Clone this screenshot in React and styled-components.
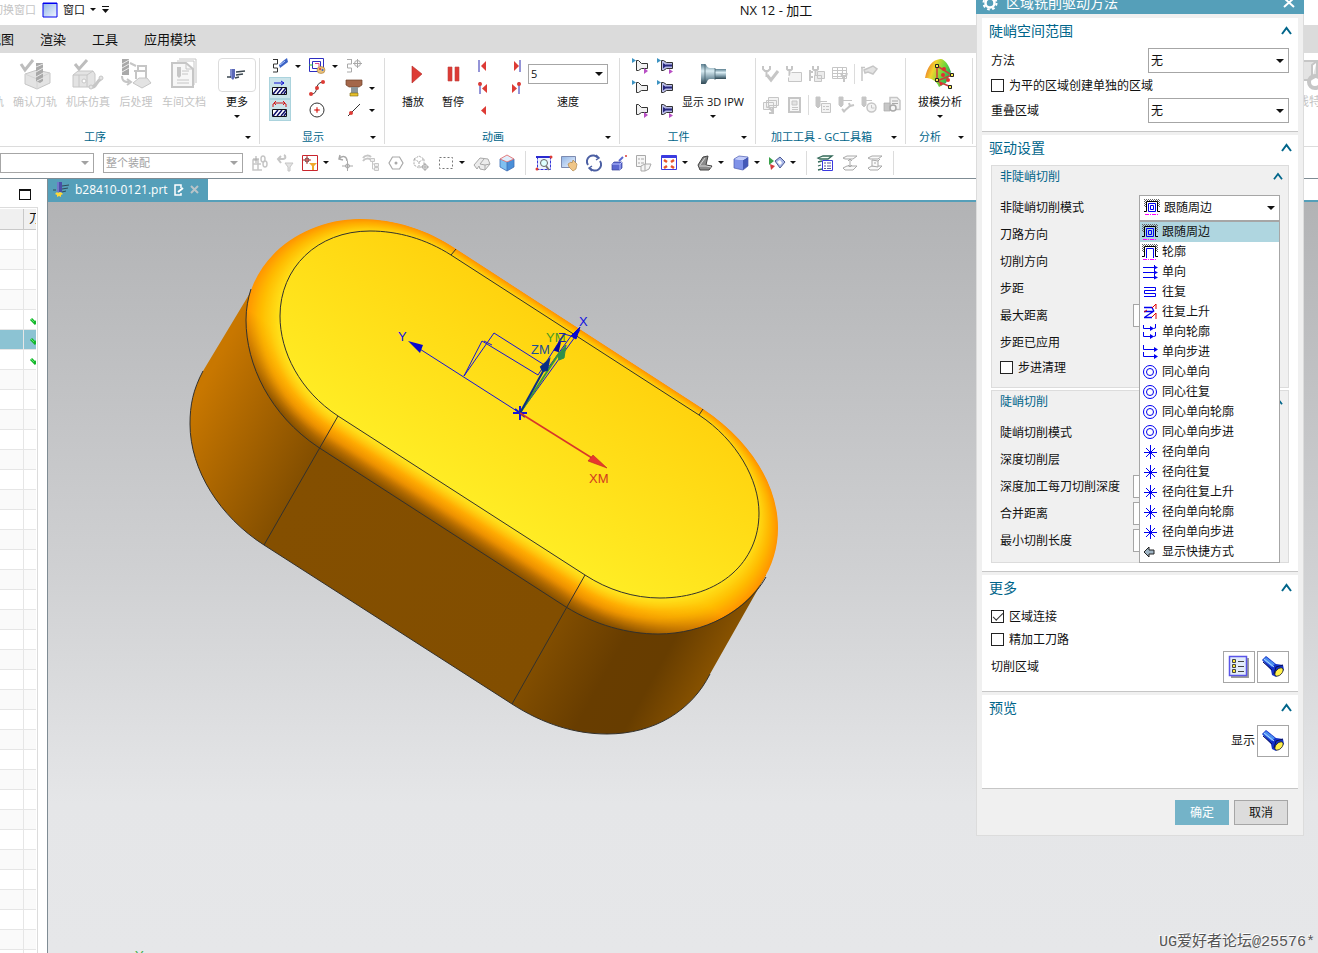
import React from "react";
import styled, { createGlobalStyle, css } from "styled-components";

const teal = "#559fb9";
const heading = "#00658a";
const line = "#dcdcdc";

const GlobalStyle = createGlobalStyle`
  * { box-sizing: border-box; }
  html, body { margin: 0; padding: 0; }
  body {
    font-family: "Open Sans", "Noto Sans CJK SC", sans-serif;
    font-size: 12px;
    line-height: 16px;
    color: #111;
    background: #fff;
    overflow: hidden;
  }
  button, select, input { font: inherit; color: inherit; margin: 0; }
  button { padding: 0; border: 0; background: none; }
`;

/* ---------- shared pieces ---------- */

const Page = styled.div`
  position: relative;
  display: flex;
  flex-direction: column;
  height: 100vh;
  overflow: hidden;
`;

const Svg = styled.svg`
  display: block;
  flex: none;
  overflow: visible;
`;

const Caret = ({ color = "#111", size = 6 }) => (
  <Svg width={size} height={size / 2} viewBox="0 0 6 3" aria-hidden="true">
    <path d="M0 0h6L3 3z" fill={color} />
  </Svg>
);

const g1 = "#c6c6c6";
const g2 = "#e3e3e3";
const g3 = "#a9a9a9";
const red = "#dd3b35";

const glyphs = {
  /* large ribbon drawings, 32 x 32 */
  generate: <path d="M4 6h14v18H4z" fill={g2} stroke={g1} />,
  verify: (
    <>
      <path d="M6 16l12-4 13 3v10l-13 6-12-5z" fill={g2} stroke={g1} />
      <path d="M6 16l12 5 13-6M18 21v10" fill="none" stroke="#d4d4d4" />
      <path d="M17 5h7v18l-3 2-4-2z" fill={g3} />
      <path d="M17 9l7-3M17 14l7-4M17 19l7-4M18 23l6-3" stroke="#e8e8e8" />
      <path d="M2 6l4 6 8-10" fill="none" stroke="#bdbdbd" strokeWidth="3" />
    </>
  ),
  simulate: (
    <>
      <path d="M1 17l5-4h15l2 3v10l-5 3H1z" fill={g2} stroke={g1} />
      <path d="M1 17h14v12M15 17l6-4M7 17v12" fill="none" stroke={g1} />
      <circle cx="12" cy="23" r="2" fill="#fff" stroke={g1} />
      <path d="M20 29c4 1 4-6 9-8" fill="none" stroke={g1} strokeWidth="3" />
      <circle cx="19" cy="29" r="2" fill={g2} stroke={g1} />
      <circle cx="29" cy="20" r="2" fill={g2} stroke={g1} />
      <path d="M3 6l4 5 8-9" fill="none" stroke="#bdbdbd" strokeWidth="3" />
    </>
  ),
  post: (
    <>
      <path d="M2 1h7v16H2z" fill={g3} />
      <path d="M2 6l7-4M2 10l7-4M2 14l7-4" stroke="#ededed" />
      <path d="M10 5l6 3M14 13h12M18 8h8v5h-8zM16 13v8M26 12v10" fill="none" stroke={g1} strokeWidth="2" />
      <path d="M13 25l6-5h8l4 5-9 5z" fill={g2} stroke={g1} />
      <path d="M2 18c0 6 4 6 7 6M7 21l4 3-4 3" fill="none" stroke={g1} strokeWidth="2" />
    </>
  ),
  doc: (
    <>
      <path d="M11 1h17v24M9 3h17v24" fill="none" stroke={g1} />
      <path d="M4 5h14l7 6v18H4z" fill="#f7f7f7" stroke={g1} strokeWidth="2" />
      <path d="M18 5v6h7" fill="none" stroke={g1} />
      <path d="M9 9h4v9l-2 2-2-2z" fill={g1} />
      <path d="M14 13h7M14 16h6M9 22h12M9 25h12" stroke={g1} />
    </>
  ),
  more: (
    <>
      <path d="M9 10h5v8l-2 3-3-3z" fill="#5b68b8" />
      <path d="M10 10v9" stroke="#a9b4e6" />
      <path d="M6 18h4M15 13l9-1M15 16l7-1M14 19l4-1" stroke="#3b4750" strokeWidth="1.5" />
    </>
  ),
  ipw: (
    <>
      <path d="M4 6h4c2 1 2 4 5 4h5v11h-5c-3 0-3 5-5 5H4z" fill="url(#steel)" />
      <path d="M18 11h11v10H18z" fill="url(#steel)" />
      <path d="M8 6v20M18 10v12" stroke="#3f5b69" strokeWidth="0.7" />
    </>
  ),
  draft: (
    <>
      <path d="M1 20C3 9 8 2 16 1c4-1 9 6 11 13l-5 11-7 4C12 22 7 20 1 20z" fill="url(#rainbow)" />
      <path d="M13 8v15l14 6M13 8l15 9-15 6" fill="none" stroke="#d23a3a" strokeWidth="1.5" />
      <g fill="#e23030">
        <circle cx="20" cy="11" r="2" /><circle cx="19" cy="17" r="2" />
        <circle cx="24" cy="22" r="2" /><circle cx="17" cy="26" r="1.5" />
      </g>
      <g fill="#ffef4a" stroke="#222">
        <path d="M11.5 6.5h3v3h-3zM11.5 20.5h3v3h-3zM26.5 15.5h3v3h-3zM24.5 27.5h3v3h-3z" />
      </g>
    </>
  ),
  feature: (
    <>
      <path d="M5 3h19v15l-7 4H5zM10 3v15M24 3l-5 4v14" fill={g2} stroke={g1} strokeWidth="2" />
      <circle cx="22" cy="24" r="6" fill="none" stroke={g1} strokeWidth="4" />
    </>
  ),
  play: <path d="M15 8l10 8-10 9z" fill={red} stroke="#b22a25" strokeWidth="0.6" />,
  pause: <path d="M11 9h4v14h-4zM18 9h4v14h-4z" fill={red} stroke="#c04540" strokeWidth="0.6" />,

  /* small drawings, 16 x 16 */
  pathLight: (
    <>
      <path d="M1 1.5h5M5.500 2v4h-4v4h4v4H1" fill="none" stroke="#333" />
      <path d="M7 7l4-4 4-3 1 4-4 3-4 3z" fill="#3b62c4" />
      <path d="M8 7l5-4" stroke="#a9c5ff" />
    </>
  ),
  pathColor: (
    <>
      <path d="M.5.5h14v13H.5zM3.5 3.5h8v7h-8z" fill="#fff" stroke="#2d2dc0" />
      <path d="M6 5.5h4v4" fill="none" stroke="#e04b8b" />
      <path d="M0 7h4" stroke="#2fbf2f" />
      <ellipse cx="12" cy="12" rx="4" ry="3.5" fill="#e9c07a" stroke="#a97c35" strokeWidth="0.6" />
      <circle cx="11" cy="11" r="1" fill="#d33" /><circle cx="13.5" cy="12" r="1" fill="#36c" />
    </>
  ),
  pathTarget: (
    <g fill="none" stroke={g3}>
      <path d="M1 1.5h5M5.5 2v4h-4v4h4v4H1" /><circle cx="11.5" cy="5.5" r="3" /><path d="M11.5 1v9M7 5.5h9" />
    </g>
  ),
  hatchArrow: (
    <>
      <path d="M2 3h10M9 1l3 2-3 2" fill="none" stroke="#1212d0" />
      <path d="M.5 7.5h14v7H.5z" fill="#fff" stroke="#111" />
      <path d="M1 14l5-6M5 14l5-6M9 14l5-6M12 14l2-3" stroke="#10106a" strokeWidth="1.5" />
    </>
  ),
  hatchLoop: (
    <>
      <path d="M1 5V2l2-1h9l2 1v3M4-1L2 1l2 2M11-1l2 2-2 2" fill="none" stroke="#d01818" />
      <path d="M.5 7.5h14v7H.5z" fill="#fff" stroke="#111" />
      <path d="M1 14l5-6M5 14l5-6M9 14l5-6M12 14l2-3" stroke="#10106a" strokeWidth="1.5" />
    </>
  ),
  spline: (
    <>
      <path d="M2 14c9 0 2-11 12-12" fill="none" stroke="#333" />
      <g fill={red}><circle cx="2" cy="14" r="2" /><circle cx="8" cy="8" r="2" /><circle cx="14" cy="2" r="2" /></g>
    </>
  ),
  circle: (
    <>
      <circle cx="8" cy="8" r="7" fill="none" stroke="#333" />
      <path d="M8 5v6M5 8h6" stroke={red} /><circle cx="8" cy="8" r="1.5" fill={red} />
    </>
  ),
  holder: (
    <>
      <path d="M0 0h16v5l-3 2H3L0 5z" fill="#a4674a" stroke="#6d4129" strokeWidth="0.7" />
      <path d="M5 7h7v6H5z" fill="#8d979c" /><path d="M4 13h8v3H4z" fill="#e8c22c" stroke="#7a6512" strokeWidth="0.6" />
    </>
  ),
  lineDot: (<><path d="M2 14L14 2" stroke="#333" /><circle cx="5" cy="11" r="2" fill={red} /></>),
  toStart: (<><path d="M2 2v12" stroke="#2a2ab0" /><path d="M9 3v10L4 8z" fill={red} /></>),
  toEnd: (<><path d="M13 2v12" stroke="#2a2ab0" /><path d="M7 3v10l5-5z" fill={red} /></>),
  prevOp: (<><path d="M3 2v12" stroke="#2a2ab0" /><path d="M10 4v9L5 8.5z" fill={red} /><circle cx="3" cy="4" r="2" fill={red} /></>),
  nextOp: (<><path d="M12 2v12" stroke="#2a2ab0" /><path d="M5 4v9l5-4.5z" fill={red} /><circle cx="12" cy="4" r="2" fill={red} /></>),
  back: <path d="M9 4v9L4 8.5z" fill={red} />,
  blankA: (<><path d="M0 0v5l4-2.5z" fill="#3d93c2" /><path d="M4.5 2.5h2l3 3h6v5h-6l-3 2h-2z" fill="#f1f1f1" stroke="#333" /><path d="M12 10v6l4-3z" fill="#b84fc4" /></>),
  blankB: (<><path d="M0 0v5l4-2.5z" fill="#3d93c2" /><path d="M4.5 2.500h2l3 3h6v5h-6l-3 2h-2z" fill="#f1f1f1" stroke="#333" /></>),
  blankC: (<><path d="M4.5 2.5h2l3 3h6v5h-6l-3 2h-2z" fill="#f1f1f1" stroke="#333" /><path d="M12 10v6l4-3z" fill="#b84fc4" /></>),
  partA: (<><path d="M0 0v5l4-2.5z" fill="#3d93c2" /><path d="M4.5 2.5h2l3 2h6v6h-6l-3 2h-2z" fill="#b9bce6" stroke="#333" /><path d="M6 5l4 2.500-4 3zM9 6.500h6v2H9z" fill="#27277e" /><path d="M12 11v5l4-2.5z" fill="#b84fc4" /></>),
  partB: (<><path d="M0 0v5l4-2.5z" fill="#3d93c2" /><path d="M4.5 2.5h2l3 2h6v6h-6l-3 2h-2z" fill="#b9bce6" stroke="#333" /><path d="M6 5l4 2.5-4 3zM9 6.5h6v2H9z" fill="#27277e" /></>),
  partC: (<><path d="M4.5 2.5h2l3 2h6v6h-6l-3 2h-2z" fill="#b9bce6" stroke="#333" /><path d="M6 5l4 2.5-4 3zM9 6.5h6v2H9z" fill="#27277e" /><path d="M12 11v5l4-2.5z" fill="#b84fc4" /></>),
  gcCheck: (<><path d="M0 0v3l2 2h3l2-2V0M3.5 5v6" fill="none" stroke={g1} strokeWidth="2" /><path d="M4 9l4 5 7-9" fill="none" stroke={g1} strokeWidth="3" /></>),
  gcTool: (<><path d="M1 0v3l1 1h3l1-1V0M3.5 4v6" fill="none" stroke={g1} strokeWidth="2" /><path d="M5.5 6.5h10v9h-13v-4" fill="#f3f3f3" stroke={g1} /></>),
  gcCopy: (<><path d="M4 0v3l1 1h3l1-1V0M6.5 4v6M1 4v11M1 6h3M1 11h3" fill="none" stroke={g1} strokeWidth="2" /><path d="M8.5 5.500h7v7h-7zM5.5 9.5h7v6h-7z" fill="#ececec" stroke={g1} /></>),
  gcTable: (<><path d="M.5 1.5h14v11H.5zM.5 4.5h14M.5 7.5h14M.5 10.500h14M5.5 1v11M10.5 1v11" fill="none" stroke={g1} /><path d="M9 7l1 3h4l1-3M12 10v6" fill="none" stroke={g1} strokeWidth="2" /></>),
  gcArm: (<path d="M1 1v14M0 1.500h4M3 4l9-4 4 3-4 5-5-2-3 1z" fill={g2} stroke={g1} strokeWidth="1.5" />),
  gcPages: (<><path d="M5.5.5h10v8h-10zM3.5 3.5h10v7h-10zM.5 5.5h10v7H.5z" fill="#f3f3f3" stroke={g1} /><path d="M5 9l5 6M10 11v5H6" stroke={g1} strokeWidth="2" fill="none" /></>),
  gcSheet: (<><path d="M3 1h11v14H3z" fill="#f6f6f6" stroke={g1} strokeWidth="2" /><path d="M6 4h5v4H6zM6 10.5h6M6 12.5h6" stroke={g1} fill={g2} /></>),
  gcList: (<><path d="M1 0h4v9L3 11 1 9zM5 4.500h7" stroke={g1} fill={g1} /><path d="M6.5 6.5h9v9h-9zM8 9.500h2M11 9.500h3M8 12.500h2M11 12.500h3" fill="#f3f3f3" stroke={g1} /></>),
  gcWrench: (<><path d="M1 0h4v8l-2 2-2-2zM5 3.500h9" stroke={g1} fill={g1} /><path d="M5 15l7-6M11 6l1 3 4-1M4 12l3 3" stroke={g1} strokeWidth="2" fill="none" /></>),
  gcClock: (<><path d="M1 0h4v8l-2 2-2-2zM5 3.5h6" stroke={g1} fill={g1} /><circle cx="10.5" cy="10.5" r="4.5" fill="#f3f3f3" stroke={g1} strokeWidth="1.5" /><path d="M10.5 8v3h3" fill="none" stroke={g1} /></>),
  gcPrint: (<><path d="M6 .5h7l3 3v9H6z" fill="#f1f1f1" stroke={g1} strokeWidth="1.5" /><path d="M8 4h6M8 6.500h6" stroke={g3} /><path d="M0 6h6v8H0z" fill={g1} stroke={g3} strokeWidth="0.7" /><circle cx="9" cy="11" r="3" fill="#f6f6f6" stroke={g3} strokeWidth="1.5" /></>),

  /* selection bar */
  selAsm: (<g fill="none" stroke={g1} strokeWidth="1.5"><path d="M1 5h5v10H1zM1 9h8M6 9v6h4" /><path d="M4 1v7M1 4h6" stroke={g3} strokeWidth="1" /><ellipse cx="11" cy="4" rx="2" ry="3" /><ellipse cx="13" cy="9" rx="2" ry="3" /></g>),
  selBack: (<><path d="M1 4h5c3 0 3-3 1-4M4 1L1 4l3 4" fill="none" stroke={g1} strokeWidth="2" /><path d="M8 8h8l-3 4v4h-2v-4z" fill={g2} stroke={g1} /></>),
  selFilter: (<><path d="M.5.5h15v15H.5z" fill="#fff" stroke="#c9252d" /><circle cx="5" cy="5" r="2" fill="none" stroke="#444" /><path d="M5 1v8M1 5h8" stroke="#b33" /><path d="M7 8h8l-3 3v4h-2v-4z" fill="#f0a92c" /></>),
  selUndo: (<><path d="M1 4c3-4 8-3 8 2M2 0L1 4l4 1" fill="none" stroke={g3} strokeWidth="1.5" /><path d="M9.5 6v10M4 11h11" stroke={g3} /><circle cx="9.5" cy="11" r="2" fill="none" stroke={g3} /></>),
  selTree: (<><path d="M0 3c2-3 6-3 8-1M0 6c2-3 6-3 8-1" fill="none" stroke={g1} strokeWidth="2" /><path d="M9.5 5v9h2M9 9h2" fill="none" stroke={g1} /><path d="M7.5 3.500h4v3h-4zM11.5 8.5h4v3h-4zM11.5 12.5h4v3h-4z" fill="#eee" stroke={g1} /></>),
  selHex: (<><path d="M4.5 2h7L15 8l-3.5 6h-7L1 8z" fill="none" stroke={g3} strokeWidth="1.2" /><circle cx="8" cy="8" r="1.5" fill={g3} /></>),
  selCube: (<g fill="none" stroke={g3}><path d="M1 4l5-3 5 3v6l-5 3-5-3zM1 4l5 3 5-3M6 7v6" strokeDasharray="2 1" /><circle cx="12" cy="12" r="2.5" fill="#fff" /><path d="M12 8v8M8 12h8" /></g>),
  selRect: <path d="M1.5 2.5h13v11h-13z" fill="none" stroke="#777" strokeDasharray="2 2" />,
  selShell: (<><path d="M0 10l6-7 8 1 2 5-5 6-5-1-1-3-2 3z" fill="#ececec" stroke={g3} /><path d="M6 9l4-5M6 9l5 1 5-1M11 10v5" stroke={g3} fill="none" /></>),
  cubeRed: (<><path d="M1 4l7 3v9l-7-4z" fill="#7fc0f0" /><path d="M15 4L8 7v9l7-4z" fill="#4a8fd8" /><path d="M1 4l7-4 7 4-7 3z" fill="#dfeefc" stroke="#e06060" strokeWidth="0.8" /><path d="M8 7v9M1 4v8l7 4 7-4V4" fill="none" stroke="#3f6fb5" strokeWidth="0.8" /></>),
  fitView: (<><path d="M1.5 2.5h13v12h-13z" fill="#eef4ff" stroke="#3434d8" strokeDasharray="3 1" /><path d="M0 2h16" stroke="#2a2ad0" strokeWidth="2" /><circle cx="8" cy="8" r="3.5" fill="#dff" stroke="#666" /><path d="M10 11l3 4" stroke="#777" strokeWidth="2" /><circle cx="1" cy="14" r="1.5" fill={red} /><circle cx="15" cy="2" r="1.5" fill={red} /></>),
  pan: (<><path d="M.5 1.5h14v11H.5z" fill="url(#sky)" stroke="#7d8bb0" /><path d="M7 9l3-2 1 1 1-3 4 4-1 5-3 2-4-4z" fill="#f0c687" stroke="#a5783c" strokeWidth="0.6" /></>),
  rotate: (<g fill="none" stroke="#4b5fa3" strokeWidth="2"><path d="M2 10A6 6 0 0112 3M14 6A6 6 0 014 13" /><path d="M10 0l3 3-3 2M6 16l-3-3 3-2" strokeWidth="1.5" /></g>),
  arrowCube: (<><path d="M1 9l2-2h8v6l-2 2H1z" fill="#5b68d0" stroke="#38429a" strokeWidth="0.7" /><path d="M1 9h8v6M9 9l2-2" fill="none" stroke="#b9c0ff" /><path d="M8 6l4-4" stroke="#5b68d0" strokeWidth="2" /><circle cx="15" cy="1" r="1" fill={red} /></>),
  orient: (<g fill="#f6f6f6" stroke={g3}><path d="M.5.5h9v11h-9zM2 4h2M5 4h3M2 8h2M5 8h3" /><path d="M5 11l4-2h6l-2 5-4 2H5zM9 9v7" /></g>),
  grid4: (<><path d="M.5.5h15v14H.5z" fill="#fff" stroke="#3b3be0" /><path d="M1 2h14" stroke="#3b3be0" strokeWidth="2" /><path d="M3 5l3 2M10 7l3-2M3 13l3-2M10 11l3 2" stroke="#e8542c" strokeWidth="2.5" /></>),
  shade: (<><path d="M1 10L6 2l5-1-2 9 6 1-3 4H3z" fill="#8a8a8a" stroke="#444" /><path d="M2 11h7l5 1M3 10l5-7" stroke="#d9d9d9" fill="none" /></>),
  blueCube: (<><path d="M1 4l9 1v10l-9-2z" fill="#7f92e8" /><path d="M10 5l5-3v9l-5 4z" fill="#4459b8" /><path d="M1 4l5-3 9 1-5 3z" fill="#c3cdfb" /><path d="M1 4l5-3 9 1v9l-5 4-9-2z" fill="none" stroke="#4a5ab0" strokeWidth="0.7" /></>),
  section: (<><path d="M0 2l5 4-5 4z" fill="#3aa14b" /><path d="M1 9l5 2-4 4z" fill="#d43a3a" /><path d="M6 6l5-4 5 5-5 6z" fill="#a9b8e8" stroke="#4c5a94" /><path d="M8 7l3-2 2 3-2 2z" fill="#fff" /></>),
  layers: (<><path d="M1 3l5-2h9l-4 3H3zM1 7l4-1M1 11l3-1M1 15l4-1" fill="#f4fff4" stroke="#356a5a" strokeWidth="1.3" /><path d="M5.5 5.5h10v10h-10z" fill="#fff" stroke="#3b3be0" /><path d="M7 8h2M10 8h4M7 11h2M10 11h4M7 13.5h2M10 13.5h4" stroke="#5a5a9a" strokeWidth="1.2" /></>),
  layerUp: (<g fill="#fafafa" stroke={g3}><path d="M1 3l4-2h10l-4 3H3zM1 13l4-2h10l-4 4H3z" /><path d="M8 4v8M6 6l2-2 2 2M6 10l2 2 2-2" fill="none" /></g>),
  layerBox: (<g fill="#fafafa" stroke={g3}><path d="M1 3l4-2h10l-4 3H3zM1 13l4-2h10l-4 4H3z" /><path d="M5 5l6 1v6l-6-1zM11 6l2-2M7 8h2" /></g>),

  /* drill shown on the part tab */
  drill: (<><path d="M4 0h5v10H4z" fill="#4a4fa8" /><path d="M5 0v10" stroke="#9aa0ea" /><path d="M9 4l7-1M9 7l6-1M9 10l4-1M0 8h3" stroke="#2f4a58" /><path d="M2 12l2-2 1 1 2-1 2 1 1 1-2 1v2l-2-1-2 1v-2z" fill="#ffd83a" /></>),

  /* cut patterns */
  follow: (
    <>
      <path d="M0 8V0h16v8h-2V2H2v6z" fill="url(#dither)" />
      <path d="M0 12.5h2.500v-10h11v10H16" fill="none" stroke="#000" />
      <path d="M4.5 4.5h7v8h-7zM6.5 6.5h3v4h-3z" fill="none" stroke="#0000f0" />
      <path d="M1 15.5h14" stroke="#f0f" strokeDasharray="4 1 1 1" />
    </>
  ),
  profile: (
    <>
      <path d="M0 8V0h16v8h-2V2H2v6z" fill="url(#dither)" />
      <path d="M0 12.5h2.5v-10h11v10H16" fill="none" stroke="#000" />
      <path d="M4.5 14V4.5h7V14" fill="none" stroke="#0000f0" />
      <path d="M1 15.5h14" stroke="#f0f" strokeDasharray="4 1 1 1" />
    </>
  ),
  zig: (<g stroke="#0000f0" fill="#0000f0"><path d="M1 3.5h12M1 8.5h12M1 13.5h12M12.5 1v14" fill="none" /><path d="M12 1.500l4 2-4 2zM12 6.500l4 2-4 2zM12 11.500l4 2-4 2z" stroke="none" /></g>),
  zigzag: <path d="M2 3.5h11.500v3h-11v3h11v3H2" fill="none" stroke="#0000f0" />,
  zigLift: (<><path d="M2 3.5h8l2 4M2 7.5h9M2 13.5h8M12 7l-9 6" fill="none" stroke="#0000f0" strokeWidth="1.3" /><path d="M10 4l4-4v5M2 8l3-2M10 13l4-4v6" fill="none" stroke="#e00000" /></>),
  zigContour: (<g fill="none" stroke="#0000f0"><path d="M1.5 1v3.500h9M13.5 0v4l-2 .5M1.5 8v4.500h9M13.5 8v4l-2 .5" /><path d="M8 2l4 2.500-4 2.500zM8 10l4 2.500-4 2.500z" fill="#0000f0" stroke="none" /></g>),
  zigStep: (<g fill="none" stroke="#0000f0"><path d="M1.5 1v4.5h12M1.5 8v4.5h12" /><path d="M12 3l4 2.500-4 2.500zM12 10l4 2.500-4 2.500z" fill="#0000f0" stroke="none" /></g>),
  concentric: (<g fill="none" stroke="#0000f0"><circle cx="8" cy="8" r="6.5" /><circle cx="8" cy="8" r="3.5" /></g>),
  radial: <path d="M8.500 1v14M2 8.500h13M4 4l9 9M13 4l-9 9" stroke="#0000f0" fill="none" />,
  shortcut: <path d="M2 8l5-5v3h5v4H7v3z" fill="#9fb4c4" stroke="#222" />,

  /* dialog drawings, 22 x 22 */
  list: (
    <>
      <path d="M3 2h18v20H3z" fill="#9a9a9a" />
      <path d="M1.5.5h17v19h-17z" fill="#e2ecfb" stroke="#5a55e8" strokeWidth="1.5" />
      <g fill="#ffe93a" stroke="#444"><path d="M4.5 3.5h3v3h-3zM4.5 8.5h3v3h-3zM4.5 13.5h3v3h-3z" /></g>
      <path d="M10 5.5h6M10 10.5h6M10 15.5h6" stroke="#444" />
    </>
  ),
  torch: (
    <>
      <path d="M0 4l4-4 10 8 7 1 1 5-8 7-4-2-1-5z" fill="#1330c8" />
      <path d="M1 4l3-3 9 7-3 3z" fill="#4a8df0" />
      <path d="M2 3l10 8" stroke="#b5dcff" />
      <path d="M1 6l9 8M12 18l2-7 7-2" stroke="#08105a" fill="none" />
      <ellipse cx="17" cy="16" rx="5" ry="3" fill="#fff04a" stroke="#222" strokeWidth="0.8" transform="rotate(-45 17 16)" />
    </>
  ),
};

const Icon = ({ name, size = 16 }) => (
  <Svg width={size} height={size} viewBox={`0 0 ${size} ${size}`} aria-hidden="true">
    {glyphs[name]}
  </Svg>
);

const HiddenSvg = styled.svg`
  position: absolute;
  width: 0;
  height: 0;
`;
const Defs = () => (
  <HiddenSvg aria-hidden="true">
    <defs>
      <linearGradient id="steel" x1="0" y1="0" x2="0" y2="1">
        <stop offset="0" stopColor="#5b7f90" /><stop offset="0.35" stopColor="#d9ecf3" />
        <stop offset="0.7" stopColor="#7d9aa8" /><stop offset="1" stopColor="#2f4854" />
      </linearGradient>
      <linearGradient id="rainbow" x1="0" y1="0" x2="1" y2="0.4">
        <stop offset="0" stopColor="#e84a28" /><stop offset="0.4" stopColor="#f2d22e" />
        <stop offset="0.75" stopColor="#6bd83a" /><stop offset="1" stopColor="#2fae5a" />
      </linearGradient>
      <linearGradient id="sky" x1="0" y1="0" x2="1" y2="1">
        <stop offset="0" stopColor="#8fb4e6" /><stop offset="1" stopColor="#f2f7ff" />
      </linearGradient>
      <pattern id="dither" width="2" height="2" patternUnits="userSpaceOnUse">
        <path d="M0 0h1v1H0zM1 1h1v1H1z" fill="#666" />
      </pattern>
    </defs>
  </HiddenSvg>
);

/* ---------- title and menu ---------- */

const TitleBar = styled.header`
  display: grid;
  grid-template-columns: 1fr auto 1fr;
  align-items: center;
  flex: none;
  height: 25px;
  padding: 0 0 6px 234px;
`;
const QuickAccess = styled.div`
  display: flex;
  align-items: center;
  gap: 6px;
  margin-left: -242px;
  font-size: 11px;
`;
const QuickButton = styled.button`
  display: flex;
  align-items: center;
  gap: 5px;
  white-space: nowrap;
  color: ${(p) => (p.$dim ? "#c4c4c4" : "#111")};
`;
const AppTitle = styled.h1`
  margin: 0;
  font-size: 13px;
  font-weight: 400;
`;
const MenuBar = styled.nav`
  display: flex;
  align-items: center;
  gap: 26px;
  flex: none;
  height: 28px;
  background: #dbdbdb;
`;
const MenuItem = styled.button`
  font-size: 13px;
  white-space: nowrap;
  &:first-child { margin-left: -12px; }
`;

/* ---------- ribbon ---------- */

const Ribbon = styled.div`
  display: flex;
  flex: none;
  height: 94px;
  padding: 5px 0 2px;
  border-bottom: 1px solid ${line};
  overflow: hidden;
`;
const GroupBox = styled.section`
  display: flex;
  flex-direction: column;
  justify-content: space-between;
  flex: none;
  width: ${(p) => p.$width}px;
  margin-left: ${(p) => (p.$cut ? -p.$cut : 0)}px;
  border-right: 1px solid ${line};
  font-size: 11px;
`;
const GroupBody = styled.div`
  display: flex;
  padding-left: ${(p) => p.$pad}px;
  gap: ${(p) => p.$gap || 0}px;
`;
const GroupFoot = styled.footer`
  display: flex;
  align-items: center;
  height: 14px;
  padding-right: 8px;
  line-height: 14px;
  color: ${heading};
`;
const GroupName = styled.span`
  flex: 1;
  text-align: center;
  white-space: nowrap;
  padding-right: 4px;
`;
const BigButton = styled.button`
  display: flex;
  flex-direction: column;
  align-items: center;
  flex: none;
  width: ${(p) => p.$width || 44}px;
  gap: 4px;
  line-height: 16px;
  white-space: nowrap;
  color: ${(p) => (p.$dim ? "#c4c4c4" : "#111")};
`;
const BigLabel = styled.span`
  padding-bottom: 1px;
`;
const Frame = styled.span`
  display: flex;
  justify-content: center;
  width: 38px;
  height: 34px;
  margin-bottom: -2px;
  border: 1px solid ${line};
  border-radius: 4px;
`;
const IconGrid = styled.div`
  display: grid;
  grid-template-columns: repeat(${(p) => p.$cols}, 22px);
  grid-auto-rows: 22px;
  column-gap: ${(p) => p.$gap}px;
  margin-top: -3px;
`;
const IconButton = styled.button`
  display: flex;
  align-items: center;
  gap: 7px;
  padding: 0 3px;
  ${(p) =>
    p.$on &&
    css`
      background: #cbe4ea;
      box-shadow: inset 0 0 0 1px #abd3dd;
    `}
`;
const StripRow = styled.div`
  display: flex;
  align-items: center;
  gap: 7px;
`;
const Strips = styled.div`
  display: flex;
  flex-direction: column;
  gap: 11px;
  padding-top: 6px;
`;
const Rule = styled.i`
  flex: none;
  width: 1px;
  height: 20px;
  margin: 0 -1px;
  background: ${line};
`;
const SpeedField = styled.label`
  display: flex;
  flex-direction: column;
  align-items: center;
  gap: 10px;
  width: 80px;
  padding-top: 6px;
`;
const Spacer = styled.div`
  flex: 1;
`;
const CutButton = styled(BigButton)`
  margin-right: -7px;
`;

const Group = ({ name, width, pad, gap, cut, children }) => (
  <GroupBox $width={width} $cut={cut}>
    <GroupBody $pad={pad} $gap={gap}>{children}</GroupBody>
    <GroupFoot>
      <GroupName>{name}</GroupName>
      <Caret />
    </GroupFoot>
  </GroupBox>
);

const Large = ({ icon, label, dim, width, menu }) => (
  <BigButton $dim={dim} $width={width}>
    {icon === "more" ? <Frame><Icon name="more" size={32} /></Frame> : <Icon name={icon} size={32} />}
    <BigLabel>{label}</BigLabel>
    {menu && <Caret />}
  </BigButton>
);

const displayTools = [
  ["pathLight", true], ["pathColor", true], ["pathTarget", false],
  ["hatchArrow", false, true], ["spline", false], ["holder", true],
  ["hatchLoop", false, true], ["circle", false], ["lineDot", true],
];

/* ---------- fields ---------- */

const SelectWrap = styled.span`
  position: relative;
  display: block;
  flex: none;
  width: ${(p) => p.$width}px;
  color: ${(p) => (p.$dim ? "#a2a2a2" : "#111")};
`;
const SelectBox = styled.select`
  display: block;
  width: 100%;
  height: ${(p) => p.$height}px;
  padding: 0 16px 0 ${(p) => (p.$icon ? 24 : 2)}px;
  border: 1px solid #a6a6a6;
  border-radius: 0;
  background: #fff;
  appearance: none;
  outline: none;
`;
const SelectCaret = styled.span`
  position: absolute;
  top: 50%;
  right: 5px;
  margin-top: -2px;
  pointer-events: none;
`;
const SelectIcon = styled.span`
  position: absolute;
  top: 4px;
  left: 5px;
  pointer-events: none;
`;
const Select = ({ id, label, value, width, height, dim, icon, children }) => (
  <SelectWrap $width={width} $dim={dim}>
    <SelectBox id={id} aria-label={label} $height={height} $icon={icon} defaultValue={value}>
      <option value={value}>{value}</option>
    </SelectBox>
    {icon && <SelectIcon><Icon name={icon} /></SelectIcon>}
    <SelectCaret><Caret size={8} color={dim ? "#a2a2a2" : "#111"} /></SelectCaret>
    {children}
  </SelectWrap>
);

/* ---------- selection bar ---------- */

const SelectionBar = styled.div`
  display: flex;
  align-items: center;
  gap: 9px;
  flex: none;
  height: 32px;
  border-bottom: 1px solid #7f8c94;
  font-size: 11px;
  overflow: hidden;
`;
const ToolButton = styled.button`
  display: flex;
  align-items: center;
  flex: none;
  gap: 5px;
  width: ${(p) => (p.$menu ? 27 : 16)}px;
`;
const BarRule = styled(Rule)`
  height: 24px;
  margin: 0 1px;
`;
const barTools = [
  "selAsm", "selBack", "selFilter+", "selUndo", "selTree", "selHex", "selCube", "selRect+", "selShell", "cubeRed", "|",
  "fitView", "pan", "rotate", "arrowCube", "orient", "grid4+", "shade+", "blueCube+", "section+", "|",
  "layers", "layerUp", "layerBox", "|",
];

/* ---------- work area ---------- */

const Work = styled.main`
  display: flex;
  flex: 1;
  min-height: 0;
`;
const Navigator = styled.aside`
  flex: none;
  width: 48px;
  overflow: hidden;
  border-right: 1px solid #7f8c94;
`;
const NavHead = styled.div`
  display: flex;
  justify-content: flex-end;
  height: 28px;
  padding: 10px 16px 0 0;
`;
const Restore = styled.button`
  width: 12px;
  height: 11px;
  border: 1px solid #111;
  border-top-width: 2px;
`;
const NavFrame = styled.div`
  width: 38px;
  padding: 1px 1px 0 0;
  border-top: 1px solid ${line};
  border-right: 1px solid ${line};
`;
const NavTable = styled.table`
  width: 36px;
  table-layout: fixed;
  border-collapse: separate;
  border-spacing: 0;
`;
const NavCell = styled.td`
  height: 20px;
  padding: 0;
  border-bottom: 1px solid #e6e6e6;
  border-right: ${(p) => (p.$last ? 0 : "1px solid #e6e6e6")};
  background: ${(p) => (p.$sel ? "#8cc3d3" : p.$odd ? "#fafafa" : "#fff")};
  overflow: hidden;
`;
const NavHeader = styled.th`
  height: 21px;
  padding: 0 0 0 5px;
  border-bottom: 1px solid #c9c9c9;
  border-right: ${(p) => (p.$last ? 0 : "1px solid #c9c9c9")};
  background: #f0f0f0;
  overflow: hidden;
  font-size: 12px;
  font-weight: 400;
  text-align: left;
  white-space: nowrap;
`;
const CheckSvg = styled(Svg)`
  margin: 2px 0 0 6px;
`;
const CheckMark = () => (
  <CheckSvg width="8" height="10" viewBox="0 0 8 10" aria-hidden="true">
    <path d="M1 3l4 4 5-4" fill="none" stroke="#12b52a" strokeWidth="3" />
    <path d="M1 3l3 3" fill="none" stroke="#5be86a" />
  </CheckSvg>
);
const Stage = styled.div`
  display: flex;
  flex-direction: column;
  flex: 1;
  min-width: 0;
`;
const TabStrip = styled.div`
  display: flex;
  flex: none;
  height: 23px;
  border-bottom: 2px solid ${teal};
`;
const Tab = styled.div`
  display: flex;
  align-items: center;
  gap: 6px;
  width: 160px;
  padding: 0 5px;
  background: ${teal};
  color: #fff;
  white-space: nowrap;
`;
const View = styled.div`
  flex: 1;
  min-height: 0;
  overflow: hidden;
  background: linear-gradient(#b2b3b5 0%, #d0d1d3 50%, #e5e6e8 80%, #e6e7e9 100%);
`;
const Watermark = styled.div`
  position: absolute;
  right: 3px;
  bottom: 0;
  font-family: "Liberation Mono", "Noto Sans CJK SC", monospace;
  font-size: 15px;
  line-height: 20px;
  color: #555;
  text-shadow: -1px -1px 0 #fff;
`;

/* ---------- the solid model ---------- */

/* Outline points of a rounded slot; fillet bands are blends of the two loops. */
const outer = [
  246, 320, 246, 262, 300, 219, 360, 219, 395, 219, 428, 230, 456, 249, 703, 409,
  750, 440, 778, 485, 778, 528, 778, 590, 722, 634, 658, 634, 628, 634, 595, 625, 566, 607, 318, 447,
  270, 415, 246, 365, 246, 320,
];
const inner = [
  280, 316, 280, 268, 317, 231, 370, 231, 398, 231, 426, 239, 451, 255, 699, 415,
  737, 440, 759, 480, 759, 513, 759, 562, 720, 598, 660, 598, 634, 598, 608, 590, 585, 575, 338, 416,
  300, 391, 280, 352, 280, 316,
];
const loop = (v) => {
  const part = (from, to) => v.slice(from, to).join(" ");
  return `M${part(0, 2)}C${part(2, 14)}L${part(14, 16)}C${part(16, 34)}`
    .replace(/C[^C]*$/, `C${part(16, 34)}`)
    .replace(`C${part(16, 34)}`, `C${part(16, 28)}C${part(28, 34)}`) + `L${part(34, 36)}C${part(36, 42)}Z`;
};
const blend = (t) => outer.map((a, i) => a + (inner[i] - a) * t);

const ramp = (stops, t) => {
  let i = 1;
  while (i < stops.length - 1 && t > stops[i][0]) i += 1;
  const [a, ca] = stops[i - 1];
  const [b, cb] = stops[i];
  const k = (t - a) / (b - a);
  return `rgb(${ca.map((c, n) => Math.round(c + (cb[n] - c) * k)).join(",")})`;
};
const backRamp = [[0, [255, 146, 0]], [0.4, [255, 176, 0]], [1, [255, 214, 14]]];
const sideRamp = [[0, [255, 150, 0]], [0.45, [255, 190, 0]], [1, [255, 228, 28]]];
const frontRamp = [
  [0, [134, 80, 0]], [0.18, [172, 103, 0]], [0.42, [236, 142, 0]],
  [0.62, [255, 164, 0]], [0.82, [255, 206, 18]], [1, [255, 234, 36]],
];
const bands = Array.from({ length: 32 }, (_, i) => i / 32);

const Model = () => (
  <Svg width="930" height="751" viewBox="48 202 930 751" role="img" aria-label="b28410-0121">
    <defs>
      <linearGradient id="side" gradientUnits="userSpaceOnUse" x1="195" y1="400" x2="740" y2="700">
        <stop offset="0" stopColor="#c87700" />
        <stop offset="0.1" stopColor="#a86400" />
        <stop offset="0.21" stopColor="#844f00" />
        <stop offset="0.68" stopColor="#824e00" />
        <stop offset="0.79" stopColor="#683d00" />
        <stop offset="0.86" stopColor="#673d00" />
        <stop offset="0.95" stopColor="#8c5500" />
      </linearGradient>
      <linearGradient id="top" gradientUnits="userSpaceOnUse" x1="575" y1="335" x2="461" y2="513">
        <stop offset="0" stopColor="#ffd30e" />
        <stop offset="1" stopColor="#ffee26" />
      </linearGradient>
      {bands.map((t, i) => (
        <linearGradient key={i} id={`band${i}`} gradientUnits="userSpaceOnUse" x1="456" y1="249" x2="326" y2="451">
          <stop offset="0" stopColor={ramp(backRamp, t)} />
          <stop offset="0.68" stopColor={ramp(sideRamp, t)} />
          <stop offset="0.96" stopColor={ramp(frontRamp, t)} />
        </linearGradient>
      ))}
    </defs>
    <path
      d="M253 288L203 371C193 390 190 405 190 424C190 470 220 517 264 545L512 704C543 724 575 734 607 734C655 734 692 710 710 674L766 575L566 420Z"
      fill="url(#side)"
    />
    {bands.map((t, i) => (
      <path key={i} d={loop(blend(t))} fill={`url(#band${i})`} />
    ))}
    <path d={loop(inner)} fill="url(#top)" />
    <g fill="none" stroke="#33312c" strokeWidth="1">
      <path d={loop(inner)} />
      <path d="M251 289C248 298 246 309 246 320C246 365 270 415 318 447L566 607C595 625 628 634 658 634C704 634 747 611 766 577" />
      <path d="M203 371C193 390 190 405 190 424C190 470 220 517 264 545L512 704C543 724 575 734 607 734C655 734 692 710 710 674" />
      <path d="M338 416L264 545M585 575L512 704M451 255L456 249M699 415L703 409" />
    </g>
    <g fill="none" stroke="#1414d8" strokeWidth="1">
      <path d="M520 413L412 344M464 376L494 333L546 366M464 376L482 341L538 375M484 341L492 345M538 375L564 334L571 336L548 368M520 413L580 330" />
      <path d="M513 413h14M520 406v14M515 409l10 8" strokeWidth="2" />
    </g>
    <path d="M408 341l15 4-3 8z" fill="#0808d0" />
    <path d="M580 327l-9 9 5 3z" fill="#0808d0" stroke="#0808d0" />
    <path d="M520 413L560 352" stroke="#3b9a35" strokeWidth="2" />
    <path d="M566 345l-8 10 1 5 5-2z" fill="#2f8f4a" stroke="#2f8f4a" />
    <path d="M520 413L546 366" stroke="#0a2f86" strokeWidth="2" />
    <path d="M549 360l-8 7 2 4 4-1z" fill="#0a2f86" stroke="#0a2f86" strokeWidth="2" />
    <path d="M560 342l-5 8 3 1z" fill="#0808a0" stroke="#0808a0" strokeWidth="2" />
    <path d="M520 413L592 458" stroke="#d8352a" strokeWidth="1.5" />
    <path d="M607 468l-19-7 5-6z" fill="#e8372f" stroke="#b82b20" strokeWidth="0.6" />
    <g fontFamily="'Liberation Sans', sans-serif" fontSize="13">
      <text x="398" y="341" fill="#1010e0">Y</text>
      <text x="579" y="326" fill="#1010e0">X</text>
      <text x="546" y="342" fill="#4c9a20">YM</text>
      <text x="558" y="342" fill="#2020a0">Z</text>
      <text x="531" y="354" fill="#1d4f98">ZM</text>
      <text x="589" y="483" fill="#d23a20">XM</text>
      <text x="135" y="960" fill="#3fae4a">Y</text>
    </g>
  </Svg>
);

/* ---------- drive method dialog ---------- */

const Dialog = styled.section`
  position: absolute;
  top: -8px;
  right: 14px;
  width: 328px;
  background: #f0f0f0;
  border: 1px solid ${line};
  border-top: 0;
`;
const DialogHead = styled.header`
  display: flex;
  align-items: center;
  gap: 8px;
  height: 22px;
  margin: 0 -1px 4px;
  padding: 0 8px 0 6px;
  background: ${teal};
  color: #fff;
`;
const DialogTitle = styled.h2`
  flex: 1;
  margin: 0;
  font-size: 14px;
  line-height: 20px;
  font-weight: 400;
`;
const Section = styled.section`
  margin: 0 5px 3px;
  padding: 0 9px ${(p) => p.$foot || 8}px;
  background: #fff;
  border-bottom: 1px solid #c6c6c6;
`;
const SectionHead = styled.button`
  display: flex;
  align-items: center;
  justify-content: space-between;
  width: calc(100% + 5px);
  height: 26px;
  margin: 0 0 4px -2px;
  font-size: 14px;
  color: ${heading};
`;
const SubBox = styled.div`
  padding: 0 8px 8px;
  border: 1px solid ${line};
  background: #f0f0f0;
  & + & { margin-top: 2px; }
`;
const SubHead = styled.button`
  display: flex;
  align-items: center;
  justify-content: space-between;
  width: calc(100% + 3px);
  height: 22px;
  margin-bottom: ${(p) => p.$gap}px;
  color: ${heading};
`;
const Row = styled.div`
  display: flex;
  align-items: center;
  justify-content: ${(p) => (p.$end ? "flex-end" : "space-between")};
  gap: 2px;
  height: ${(p) => p.$height}px;
`;
const Label = styled.label`
  white-space: nowrap;
`;
const TextInput = styled.input`
  width: 147px;
  height: 23px;
  border: 1px solid #a6a6a6;
  background: #fff;
`;
const CheckLabel = styled.label`
  display: flex;
  align-items: center;
  gap: 5px;
`;
const CheckInput = styled.input`
  display: grid;
  place-items: center;
  width: 13px;
  height: 13px;
  border: 1px solid #222;
  background: #fff;
  appearance: none;
  &:checked::after {
    content: "";
    width: 9px;
    height: 4px;
    margin-top: -3px;
    border: solid #333;
    border-width: 0 0 1px 1px;
    transform: rotate(-45deg);
  }
`;
const SquareButton = styled.button`
  display: grid;
  place-items: center;
  width: 32px;
  height: 32px;
  border: 1px solid #a6a6a6;
  background: #fff;
`;
const DialogFoot = styled.footer`
  display: flex;
  justify-content: flex-end;
  gap: 5px;
  padding: 8px 15px 10px;
`;
const FootButton = styled.button`
  width: 54px;
  height: 25px;
  border: 1px solid ${(p) => (p.$primary ? "#74b3c8" : "#a6a6a6")};
  background: ${(p) => (p.$primary ? "#74b3c8" : "#dcdcdc")};
  color: ${(p) => (p.$primary ? "#fff" : "#111")};
`;
const Options = styled.ul`
  position: absolute;
  z-index: 2;
  top: 100%;
  left: 0;
  width: 141px;
  margin: 0;
  padding: 0;
  border: 1px solid #a6a6a6;
  background: #fff;
  list-style: none;
`;
const Option = styled.li`
  display: flex;
  align-items: center;
  gap: 4px;
  height: 20px;
  padding-left: 2px;
  background: ${(p) => (p.$on ? "#afd6e0" : "#fff")};
  white-space: nowrap;
`;

const Up = ({ size = 11 }) => (
  <Svg width={size} height={size - 2} viewBox="0 0 11 9" aria-hidden="true">
    <path d="M1 7L5.5 1L10 7" fill="none" stroke={heading} strokeWidth="2" />
  </Svg>
);

const Tick = ({ children, checked }) => (
  <CheckLabel>
    <CheckInput type="checkbox" defaultChecked={checked} />
    {children}
  </CheckLabel>
);

const patterns = [
  ["follow", "跟随周边"], ["profile", "轮廓"], ["zig", "单向"], ["zigzag", "往复"],
  ["zigLift", "往复上升"], ["zigContour", "单向轮廓"], ["zigStep", "单向步进"],
  ["concentric", "同心单向"], ["concentric", "同心往复"], ["concentric", "同心单向轮廓"], ["concentric", "同心单向步进"],
  ["radial", "径向单向"], ["radial", "径向往复"], ["radial", "径向往复上升"], ["radial", "径向单向轮廓"],
  ["radial", "径向单向步进"], ["shortcut", "显示快捷方式"],
];

const FieldRow = ({ id, label, input }) => (
  <Row $height={27}>
    <Label as={input ? "label" : "span"} htmlFor={id}>{label}</Label>
    {input && <TextInput id={id} type="text" />}
  </Row>
);

const DriveDialog = () => (
  <Dialog role="dialog" aria-labelledby="dialog-title">
    <DialogHead>
      <Svg width="16" height="16" viewBox="0 0 16 16" aria-hidden="true">
        <circle cx="8" cy="8" r="4.5" fill="none" stroke="#fff" strokeWidth="2.5" />
        <circle cx="8" cy="8" r="6.5" fill="none" stroke="#fff" strokeWidth="2" strokeDasharray="2.6 2.5" />
      </Svg>
      <DialogTitle id="dialog-title">区域铣削驱动方法</DialogTitle>
      <button aria-label="关闭">
        <Svg width="14" height="14" viewBox="0 0 14 14">
          <path d="M2 2l10 9M12 2L2 11" stroke="#fff" strokeWidth="2" />
        </Svg>
      </button>
    </DialogHead>

    <Section>
      <SectionHead>陡峭空间范围<Up /></SectionHead>
      <Row $height={25}>
        <Label htmlFor="method">方法</Label>
        <Select id="method" value="无" width={141} height={25} />
      </Row>
      <Row $height={25}><Tick>为平的区域创建单独的区域</Tick></Row>
      <Row $height={25}>
        <Label htmlFor="overlap">重叠区域</Label>
        <Select id="overlap" value="无" width={141} height={25} />
      </Row>
    </Section>

    <Section>
      <SectionHead>驱动设置<Up /></SectionHead>
      <SubBox>
        <SubHead $gap={6}>非陡峭切削<Up size={10} /></SubHead>
        <Row $height={27}>
          <Label htmlFor="pattern">非陡峭切削模式</Label>
          <Select id="pattern" value="跟随周边" width={141} height={26} icon="follow">
            <Options role="listbox" aria-label="非陡峭切削模式">
              {patterns.map(([icon, text], i) => (
                <Option key={text} role="option" aria-selected={i === 0} $on={i === 0}>
                  <Icon name={icon} />
                  {text}
                </Option>
              ))}
            </Options>
          </Select>
        </Row>
        <FieldRow label="刀路方向" />
        <FieldRow label="切削方向" />
        <FieldRow label="步距" />
        <FieldRow id="max-distance" label="最大距离" input />
        <FieldRow label="步距已应用" />
        <Row $height={23}><Tick>步进清理</Tick></Row>
      </SubBox>
      <SubBox>
        <SubHead $gap={6}>陡峭切削<Up size={10} /></SubHead>
        <FieldRow label="陡峭切削模式" />
        <FieldRow label="深度切削层" />
        <FieldRow id="depth" label="深度加工每刀切削深度" input />
        <FieldRow id="merge" label="合并距离" input />
        <FieldRow id="min-length" label="最小切削长度" input />
      </SubBox>
    </Section>

    <Section>
      <SectionHead>更多<Up /></SectionHead>
      <Row $height={23}><Tick checked>区域连接</Tick></Row>
      <Row $height={23}><Tick>精加工刀路</Tick></Row>
      <Row $height={32}>
        <Label as="span">切削区域</Label>
        <Spacer />
        <SquareButton aria-label="列表"><Icon name="list" size={22} /></SquareButton>
        <SquareButton aria-label="显示切削区域"><Icon name="torch" size={22} /></SquareButton>
      </Row>
    </Section>

    <Section $foot={31}>
      <SectionHead>预览<Up /></SectionHead>
      <Row $height={32} $end>
        <Label as="span">显示</Label>
        <SquareButton aria-label="显示"><Icon name="torch" size={22} /></SquareButton>
      </Row>
    </Section>

    <DialogFoot>
      <FootButton $primary>确定</FootButton>
      <FootButton>取消</FootButton>
    </DialogFoot>
  </Dialog>
);

/* ---------- page ---------- */

const navRows = Array.from({ length: 40 }, (_, i) => i);

export default function App() {
  return (
    <Page>
      <GlobalStyle />
      <Defs />
      <TitleBar>
        <QuickAccess>
          <QuickButton $dim>切换窗口</QuickButton>
          <QuickButton>
            <Svg width="16" height="16" viewBox="0 0 16 16" aria-hidden="true">
              <path d="M1 1h14v14H1z" fill="url(#sky)" stroke="#0000f0" />
              <path d="M1 1.5h14" stroke="#0000f0" />
            </Svg>
            窗口
            <Caret />
          </QuickButton>
          <button aria-label="自定义">
            <Svg width="7" height="7" viewBox="0 0 7 7"><path d="M0 .5h7" stroke="#111" /><path d="M0 3h7L3.5 7z" fill="#111" /></Svg>
          </button>
        </QuickAccess>
        <AppTitle>NX 12 - 加工</AppTitle>
      </TitleBar>

      <MenuBar>
        {["视图", "渲染", "工具", "应用模块"].map((m) => <MenuItem key={m}>{m}</MenuItem>)}
      </MenuBar>

      <Ribbon>
        <Group name="工序" width={311} cut={51} pad={11} gap={9}>
          <Large icon="generate" label="生成刀轨" dim />
          <Large icon="verify" label="确认刀轨" dim />
          <Large icon="simulate" label="机床仿真" dim />
          <Large icon="post" label="后处理" dim width={34} />
          <Large icon="doc" label="车间文档" dim />
          <Large icon="more" label="更多" menu />
        </Group>
        <Group name="显示" width={125} pad={9}>
          <IconGrid $cols={3} $gap={15}>
            {displayTools.map(([name, menu, on]) => (
              <IconButton key={name} aria-label={name} $on={on}>
                <Icon name={name} />
                {menu && <Caret />}
              </IconButton>
            ))}
          </IconGrid>
        </Group>
        <Group name="动画" width={235} pad={9} gap={2}>
          <Large icon="play" label="播放" width={38} />
          <Large icon="pause" label="暂停" width={38} />
          <IconGrid $cols={2} $gap={8}>
            {["toStart", "toEnd", "prevOp", "nextOp", "back"].map((n) => (
              <IconButton key={n} aria-label={n}><Icon name={n} /></IconButton>
            ))}
          </IconGrid>
          <SpeedField>
            <Select value="5" width={80} height={20} label="速度" />
            速度
          </SpeedField>
        </Group>
        <Group name="工件" width={136} pad={9} gap={3}>
          <IconGrid $cols={2} $gap={3}>
            {["blankA", "partA", "blankB", "partB", "blankC", "partC"].map((n) => (
              <IconButton key={n} aria-label={n}><Icon name={n} /></IconButton>
            ))}
          </IconGrid>
          <Large icon="ipw" label="显示 3D IPW" width={68} menu />
        </Group>
        <Group name="加工工具 - GC工具箱" width={150} pad={7}>
          <Strips>
            <StripRow>
              {["gcCheck", "gcTool", "gcCopy", "gcTable"].map((n) => <ToolButton key={n} aria-label={n}><Icon name={n} /></ToolButton>)}
              <Rule />
              <ToolButton aria-label="gcArm"><Icon name="gcArm" /></ToolButton>
            </StripRow>
            <StripRow>
              {["gcPages", "gcSheet"].map((n) => <ToolButton key={n} aria-label={n}><Icon name={n} /></ToolButton>)}
              <Rule />
              {["gcList", "gcWrench", "gcClock", "gcPrint"].map((n) => <ToolButton key={n} aria-label={n}><Icon name={n} /></ToolButton>)}
            </StripRow>
          </Strips>
        </Group>
        <Group name="分析" width={67} pad={12}>
          <Large icon="draft" label="拔模分析" menu />
        </Group>
        <Spacer />
        <CutButton $dim $width={32}>
          <Icon name="feature" size={32} />
          <BigLabel>线特</BigLabel>
        </CutButton>
      </Ribbon>

      <SelectionBar>
        <Select value="" width={94} height={20} dim label="类型过滤器" />
        <Select value="整个装配" width={140} height={20} dim label="选择范围" />
        {barTools.map((t, i) => {
          if (t === "|") return <BarRule key={i} />;
          const menu = t.endsWith("+");
          const name = menu ? t.slice(0, -1) : t;
          return (
            <ToolButton key={i} aria-label={name} $menu={menu}>
              <Icon name={name} />
              {menu && <Caret />}
            </ToolButton>
          );
        })}
      </SelectionBar>

      <Work>
        <Navigator>
          <NavHead><Restore aria-label="还原" /></NavHead>
          <NavFrame>
            <NavTable>
              <colgroup><col width="24" /><col width="12" /></colgroup>
              <thead><tr><NavHeader /><NavHeader $last>刀</NavHeader></tr></thead>
              <tbody>
                {navRows.map((i) => (
                  <tr key={i}>
                    <NavCell $odd={i % 2} $sel={i === 5} />
                    <NavCell $odd={i % 2} $sel={i === 5} $last>{i > 3 && i < 7 && <CheckMark />}</NavCell>
                  </tr>
                ))}
              </tbody>
            </NavTable>
          </NavFrame>
        </Navigator>
        <Stage>
          <TabStrip>
            <Tab>
              <Icon name="drill" />
              b28410-0121.prt
              <Svg width="10" height="12" viewBox="0 0 10 12" aria-hidden="true">
                <path d="M7 4V1H1v10h6V9" fill="none" stroke="#fff" strokeWidth="1.5" />
                <path d="M4 8l5-4" stroke="#fff" strokeWidth="2" />
              </Svg>
              <button aria-label="关闭">
                <Svg width="9" height="9" viewBox="0 0 9 9"><path d="M1 1l7 7M8 1L1 8" stroke="#b9c4c8" strokeWidth="2" /></Svg>
              </button>
            </Tab>
          </TabStrip>
          <View><Model /></View>
        </Stage>
      </Work>

      <Watermark>UG爱好者论坛@25576*</Watermark>
      <DriveDialog />
    </Page>
  );
}
